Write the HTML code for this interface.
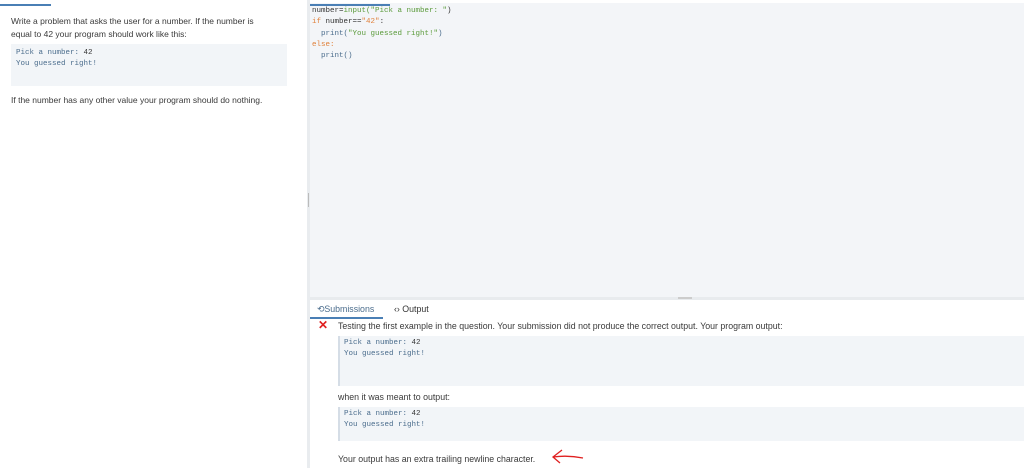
<!DOCTYPE html>
<html><head><meta charset="utf-8"><style>
*{margin:0;padding:0;box-sizing:border-box}
body{width:1024px;height:468px;overflow:hidden;background:#fff;font-family:"Liberation Sans",sans-serif;position:relative;color:#333}
.abs{position:absolute}
.mono{font-family:"Liberation Mono",monospace;font-size:7.5px;line-height:11px}
.txt{font-size:8.5px;color:#3a3a3a}
.code{background:#f2f5f8;border-left:2px solid #d5dde6;}
.b{color:#4a6c8c}.g{color:#5a9a3a}.o{color:#e0803a}.k{color:#333}
</style></head><body>
<div class="abs" style="left:0;top:4px;width:51px;height:2px;background:#4a7fb5"></div>
<div class="abs txt" style="left:11px;top:15px;line-height:13px;width:262px">Write a problem that asks the user for a number. If the number is equal to 42 your program should work like this:</div>
<div class="abs code mono" style="left:11px;top:44px;width:276px;height:42px;border-left:none;padding:4px 5px">
<span class="b">Pick a number: </span><span class="k">42</span><br><span class="b">You guessed right!</span></div>
<div class="abs txt" style="left:11px;top:95px">If the number has any other value your program should do nothing.</div>

<div class="abs" style="left:307px;top:0;width:3px;height:468px;background:#e9ecef"></div>
<div class="abs" style="left:310px;top:0;width:714px;height:297px;background:#f3f5f8"></div>
<div class="abs" style="left:310px;top:0;width:714px;height:3px;background:#fff"></div>
<div class="abs" style="left:310px;top:4px;width:80px;height:2px;background:#4a7fb5"></div>
<div class="abs" style="left:308px;top:193px;width:1px;height:14px;background:#bbb"></div>
<div class="abs mono" style="left:312px;top:6px;line-height:11.3px">
<span class="k">number=</span><span class="g">input(</span><span class="g">"Pick a number: "</span><span class="k">)</span><br>
<span class="o">if</span> <span class="k">number==</span><span class="o">"42"</span><span class="k">:</span><br>
&nbsp;&nbsp;<span class="b">print(</span><span class="g">"You guessed right!"</span><span class="b">)</span><br>
<span class="o">else:</span><br>
&nbsp;&nbsp;<span class="b">print()</span></div>
<div class="abs" style="left:310px;top:297px;width:714px;height:3px;background:#e8ebee"></div>
<div class="abs" style="left:678px;top:297px;width:14px;height:2px;background:#ccc"></div>

<div class="abs" style="left:317px;top:304px;font-size:8.8px;color:#4a6c8c">&#x27F2;Submissions</div>
<div class="abs" style="left:310px;top:317px;width:73px;height:1.5px;background:#4a7fb5"></div>
<div class="abs" style="left:394px;top:304px;font-size:8.8px;color:#333">&lsaquo;&rsaquo; Output</div>
<div class="abs" style="left:318px;top:318px;font-size:12px;font-weight:bold;color:#e02020">✕</div>
<div class="abs txt" style="left:338px;top:321px;font-size:8.8px">Testing the first example in the question. Your submission did not produce the correct output. Your program output:</div>
<div class="abs code mono" style="left:338px;top:336px;width:686px;height:50px;padding:2px 4px">
<span class="b">Pick a number: </span><span class="k">42</span><br><span class="b">You guessed right!</span></div>
<div class="abs txt" style="left:338px;top:392px;font-size:8.8px">when it was meant to output:</div>
<div class="abs code mono" style="left:338px;top:407px;width:686px;height:34px;padding:2px 4px">
<span class="b">Pick a number: </span><span class="k">42</span><br><span class="b">You guessed right!</span></div>
<div class="abs txt" style="left:338px;top:454px;font-size:8.8px">Your output has an extra trailing newline character.</div>
<svg class="abs" style="left:550px;top:448px" width="36" height="18"><path d="M12 2 L3 9 L10 15 M3 9 Q18 7 33 10" stroke="#e02020" stroke-width="1.3" fill="none"/></svg>
</body></html>
